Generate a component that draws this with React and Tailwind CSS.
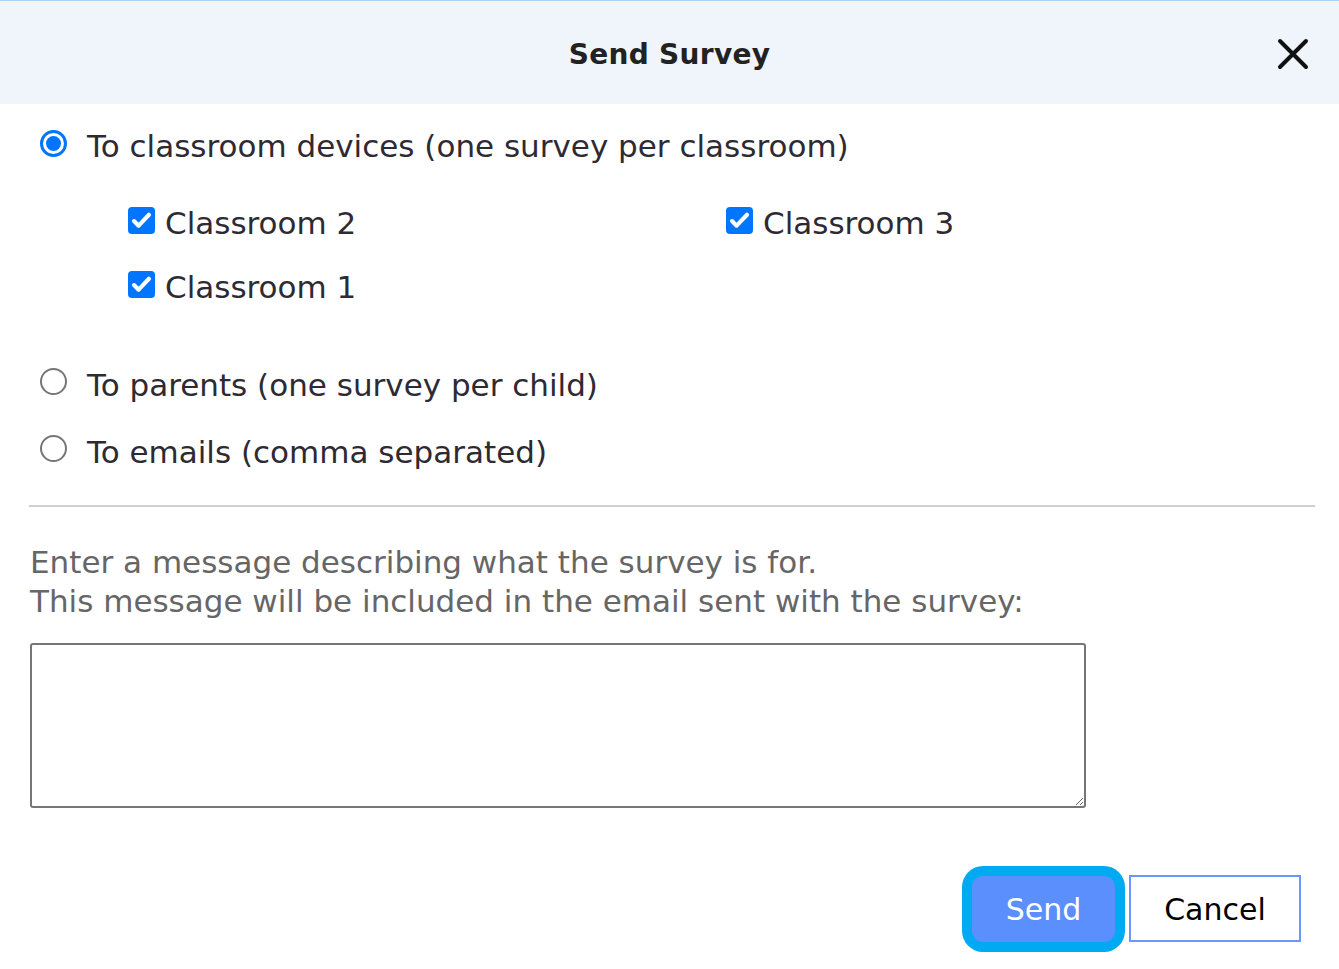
const font = { fontFamily: '"DejaVu Sans", "Liberation Sans", sans-serif' };

const Radio = ({ checked }) =>
  checked ? (
    <span className="w-[27px] h-[27px] rounded-full border-[3px] border-[#0075ff] flex items-center justify-center shrink-0">
      <span className="w-[15px] h-[15px] rounded-full bg-[#0075ff]" />
    </span>
  ) : (
    <span className="w-[27px] h-[27px] rounded-full border-2 border-[#767676] bg-white shrink-0" />
  );

const Checkbox = () => (
  <span className="w-[27px] h-[27px] rounded-[4px] bg-[#0075ff] flex items-center justify-center shrink-0">
    <svg width="23" height="23" viewBox="0 0 20 20" fill="none">
      <path d="M3.5 10.5l4 4L16.5 5" stroke="white" strokeWidth="3.6" strokeLinecap="round" strokeLinejoin="round" />
    </svg>
  </span>
);

const Classroom = ({ name }) => (
  <label className="flex items-center gap-[10px] h-[64px] text-[31px] text-[#2e2a33]">
    <Checkbox />
    <span className="pt-[6px]">{name}</span>
  </label>
);

export default function App() {
  return (
    <div className="w-[1339px] h-[969px] bg-white" style={font}>
      <div className="h-[104px] border-t border-[#a9d3f2] bg-[#f0f4fb] relative flex items-center justify-center">
        <h1 className="text-[28px] font-bold text-[#222] tracking-[0.3px] pt-[4px]">Send Survey</h1>
        <button className="absolute right-[30px] top-[37px] w-[32px] h-[32px] flex items-center justify-center">
          <svg width="32" height="32" viewBox="0 0 32 32">
            <path d="M3 3L29 29M29 3L3 29" stroke="#111" strokeWidth="4" strokeLinecap="round" />
          </svg>
        </button>
      </div>

      <div className="pl-[29px] pr-[24px]">
        <label className="flex items-center gap-[20px] h-[78px] pl-[11px] text-[31px] text-[#2e2a33]">
          <Radio checked />
          <span className="pt-[6px]">To classroom devices (one survey per classroom)</span>
        </label>

        <div className="grid grid-cols-[598px_1fr] pl-[99px] mt-[6px]">
          <Classroom name="Classroom 2" />
          <Classroom name="Classroom 3" />
          <Classroom name="Classroom 1" />
        </div>

        <div className="mt-[32px]">
          <label className="flex items-center gap-[20px] h-[67px] pl-[11px] text-[31px] text-[#2e2a33]">
            <Radio />
            <span className="pt-[7px]">To parents (one survey per child)</span>
          </label>
          <label className="flex items-center gap-[20px] h-[67px] pl-[11px] text-[31px] text-[#2e2a33]">
            <Radio />
            <span className="pt-[7px]">To emails (comma separated)</span>
          </label>
        </div>

        <hr className="mt-[23px] border-0 border-t-2 border-[#d0d0d0]" />

        <p className="mt-[36px] text-[31px] leading-[39px] text-[#666] pl-[1px]">
          Enter a message describing what the survey is for.
          <br />
          This message will be included in the email sent with the survey:
        </p>

        <textarea className="block mt-[22px] ml-[1px] w-[1056px] h-[165px] border-2 border-[#767676] rounded-[3px] bg-white outline-none" />

        <div className="flex justify-end items-center gap-[14px] mt-[67px] pr-[14px]">
          <button className="w-[143px] h-[66px] rounded-[11px] bg-[#5b8ffd] text-white text-[30px] ring-[10px] ring-[#00aaf2]">
            <span className="block pt-[1px]">Send</span>
          </button>
          <button className="w-[172px] h-[67px] border-2 border-[#6699f9] bg-white text-black text-[30px]">
            <span className="block pt-[1px]">Cancel</span>
          </button>
        </div>
      </div>
    </div>
  );
}
